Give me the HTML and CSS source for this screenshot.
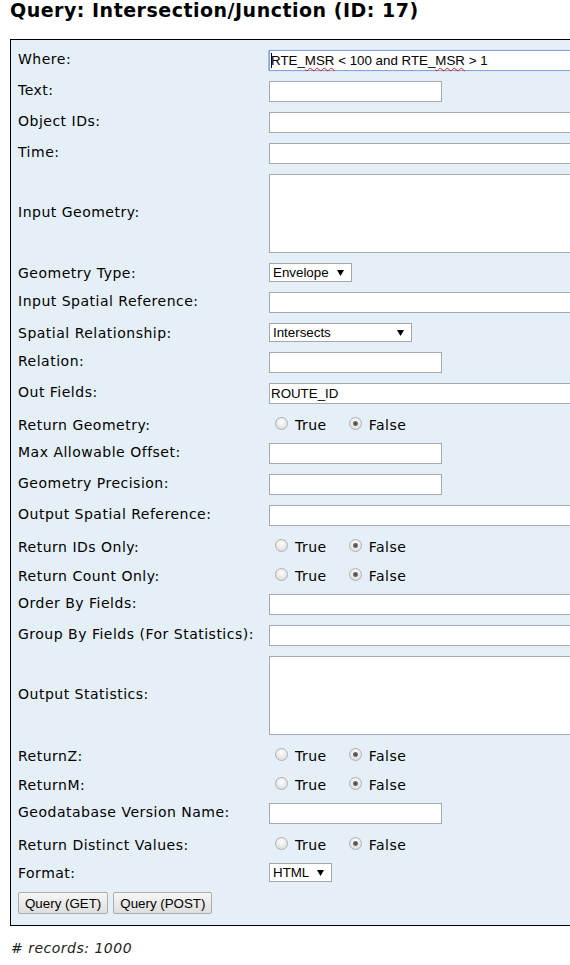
FILE: index.html
```html
<!DOCTYPE html>
<html lang="en">
<head>
<meta charset="utf-8">
<title>Query: Intersection/Junction (ID: 17)</title>
<link rel="stylesheet" href="styles.css">
</head>
<body>
<div class="page">
<h2 class="title">Query: Intersection/Junction (ID: 17)</h2>
<form class="query-form">
  <div class="grid">
    <label class="lbl">Where:</label>
    <div class="fake-input wide focused"><span class="caret"></span>RTE_<span class="sp">MSR</span> &lt; 100 and RTE_<span class="sp">MSR</span> &gt; 1</div>

    <label class="lbl">Text:</label>
    <div><input class="txt short" type="text"></div>

    <label class="lbl">Object IDs:</label>
    <div><input class="txt wide" type="text"></div>

    <label class="lbl">Time:</label>
    <div><input class="txt wide" type="text"></div>

    <label class="lbl">Input Geometry:</label>
    <div><textarea class="area"></textarea></div>

    <label class="lbl sel">Geometry Type:</label>
    <div><span class="select w-env"><span>Envelope</span><svg class="arrow" width="7" height="6" viewBox="0 0 7 6"><path d="M0 0h7L3.5 6z" fill="#000"/></svg></span></div>

    <label class="lbl">Input Spatial Reference:</label>
    <div><input class="txt wide" type="text"></div>

    <label class="lbl sel">Spatial Relationship:</label>
    <div><span class="select w-rel"><span>Intersects</span><svg class="arrow" width="7" height="6" viewBox="0 0 7 6"><path d="M0 0h7L3.5 6z" fill="#000"/></svg></span></div>

    <label class="lbl">Relation:</label>
    <div><input class="txt short" type="text"></div>

    <label class="lbl">Out Fields:</label>
    <div><input class="txt wide" type="text" value="ROUTE_ID"></div>

    <label class="lbl r">Return Geometry:</label>
    <div class="radios"><span class="radio"></span><span class="rtxt">True</span><span class="radio checked"></span><span class="rtxt">False</span></div>

    <label class="lbl">Max Allowable Offset:</label>
    <div><input class="txt short" type="text"></div>

    <label class="lbl">Geometry Precision:</label>
    <div><input class="txt short" type="text"></div>

    <label class="lbl">Output Spatial Reference:</label>
    <div><input class="txt wide" type="text"></div>

    <label class="lbl r">Return IDs Only:</label>
    <div class="radios"><span class="radio"></span><span class="rtxt">True</span><span class="radio checked"></span><span class="rtxt">False</span></div>

    <label class="lbl r">Return Count Only:</label>
    <div class="radios"><span class="radio"></span><span class="rtxt">True</span><span class="radio checked"></span><span class="rtxt">False</span></div>

    <label class="lbl">Order By Fields:</label>
    <div><input class="txt wide" type="text"></div>

    <label class="lbl">Group By Fields (For Statistics):</label>
    <div><input class="txt wide" type="text"></div>

    <label class="lbl">Output Statistics:</label>
    <div><textarea class="area"></textarea></div>

    <label class="lbl r">ReturnZ:</label>
    <div class="radios"><span class="radio"></span><span class="rtxt">True</span><span class="radio checked"></span><span class="rtxt">False</span></div>

    <label class="lbl r">ReturnM:</label>
    <div class="radios"><span class="radio"></span><span class="rtxt">True</span><span class="radio checked"></span><span class="rtxt">False</span></div>

    <label class="lbl">Geodatabase Version Name:</label>
    <div><input class="txt short" type="text"></div>

    <label class="lbl r">Return Distinct Values:</label>
    <div class="radios"><span class="radio"></span><span class="rtxt">True</span><span class="radio checked"></span><span class="rtxt">False</span></div>

    <label class="lbl sel">Format:</label>
    <div><span class="select w-fmt"><span>HTML</span><svg class="arrow" width="7" height="6" viewBox="0 0 7 6"><path d="M0 0h7L3.5 6z" fill="#000"/></svg></span></div>

    <div class="buttons">
      <button type="button" class="btn">Query (GET)</button>
      <button type="button" class="btn">Query (POST)</button>
    </div>
  </div>
</form>
<p class="records"># records: 1000</p>
</div>
</body>
</html>
```

FILE: styles.css
```css
html, body {
  overflow: hidden;
}
body {
  margin: 0;
  font-family: "DejaVu Sans", Verdana, sans-serif;
  font-size: 14px;
  letter-spacing: 0.5px;
  color: #000;
  background: #fff;
}
.page {
  box-sizing: border-box;
  width: 570px;
  padding-left: 10px;
  overflow: hidden;
}
.title {
  margin: 0 0 18px;
  font-size: 19px;
  font-weight: bold;
  letter-spacing: 0.5px;
  line-height: 21px;
  white-space: nowrap;
}
.query-form {
  margin: 0;
  width: 820px;
  border: 1px solid #000;
  background: #e5eff7;
}
.grid {
  display: grid;
  grid-template-columns: 251px 1fr;
  row-gap: 10px;
  align-items: center;
  padding: 10px 0 11px 7px;
}
.lbl {
  white-space: nowrap;
  padding-bottom: 3px;
}
.lbl.sel {
  padding-bottom: 0;
}
.lbl.r {
  padding-bottom: 0;
  padding-top: 2px;
}
.txt, .fake-input {
  box-sizing: border-box;
  height: 21px;
  margin: 0;
  padding: 0 1px;
  border: 1px solid #a9a9a9;
  background: #fff;
  font-family: "Liberation Sans", Arial, sans-serif;
  font-size: 13.33px;
  letter-spacing: 0;
  color: #000;
  display: block;
}
.short { width: 173px; }
.wide { width: 520px; }
.fake-input {
  display: flex;
  align-items: center;
  white-space: pre;
  border-color: #7fa6dc;
  box-shadow: -1px 0 0 #9dbde8, 0 0 1px 0 #a9c6ec;
}
.caret {
  display: inline-block;
  width: 1px;
  height: 15px;
  background: #000;
  margin-right: -1px;
}
.sp {
  text-decoration: underline wavy #e02020;
  text-decoration-thickness: 1px;
  text-decoration-skip-ink: none;
  text-underline-offset: 2px;
}
.area {
  display: block;
  box-sizing: border-box;
  width: 520px;
  height: 79px;
  margin: 0;
  border: 1px solid #a9a9a9;
  background: #fff;
  resize: none;
}
.select {
  box-sizing: border-box;
  display: flex;
  align-items: center;
  justify-content: space-between;
  height: 19px;
  padding: 0 7px 0 3px;
  border: 1px solid #a6a6a6;
  background: #fff;
  font-family: "Liberation Sans", Arial, sans-serif;
  font-size: 13.33px;
  letter-spacing: 0;
}
.w-env { width: 83px; }
.w-rel { width: 143px; }
.w-fmt { width: 63px; }
.arrow { display: block; }
.radios {
  display: flex;
  align-items: center;
  height: 19px;
}
.rtxt {
  padding-top: 2px;
}
.radio {
  box-sizing: border-box;
  width: 13px;
  height: 13px;
  border-radius: 50%;
  border: 1px solid #b0b0b0;
  background: radial-gradient(circle at 50% 35%, #ffffff 0, #f0f0f0 35%, #d6d6d6 100%);
  margin: 0 7px 0 6px;
}
.radio.checked {
  background:
    radial-gradient(circle at 50% 50%, #4a4a4a 0, #6a6a6a 2px, transparent 3px),
    radial-gradient(circle at 50% 35%, #ffffff 0, #f0f0f0 35%, #d6d6d6 100%);
}
.rtxt + .radio {
  margin-left: 22px;
}
.buttons {
  grid-column: 1 / -1;
  display: flex;
  gap: 5px;
}
.btn {
  box-sizing: border-box;
  height: 22px;
  margin: 0;
  padding: 0 6px;
  border: 1px solid #acacac;
  border-radius: 2px;
  background: linear-gradient(#f7f7f7, #dedede);
  font-family: "Liberation Sans", Arial, sans-serif;
  font-size: 13.33px;
  letter-spacing: 0;
  color: #000;
}
.records {
  margin: 14px 0 0 1px;
  font-size: 14px;
  font-style: italic;
  color: #222;
}
```
